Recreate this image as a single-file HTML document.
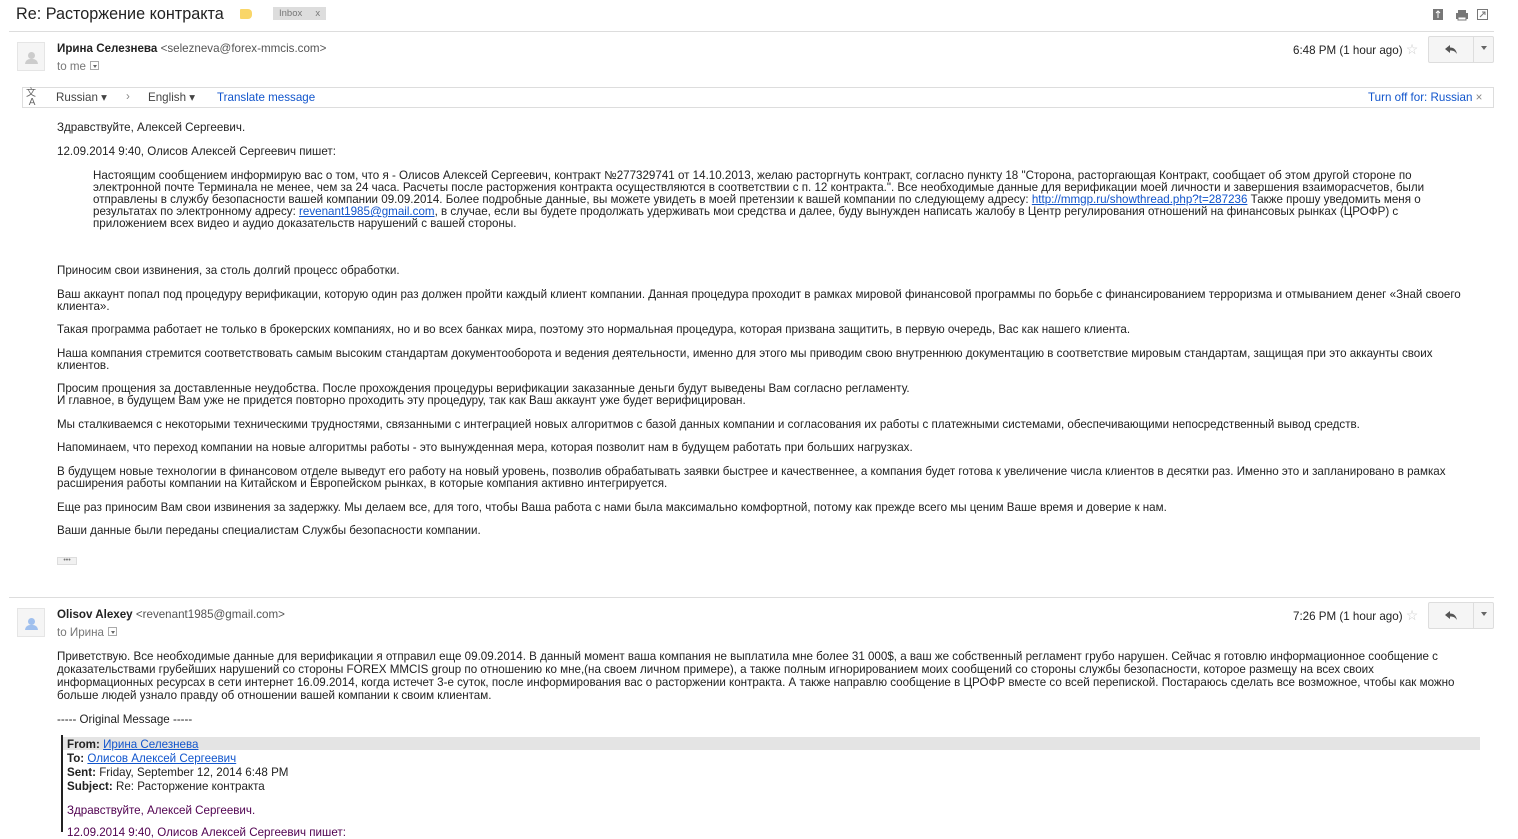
<!DOCTYPE html>
<html><head><meta charset="utf-8">
<style>
*{margin:0;padding:0;box-sizing:border-box}
body{width:1518px;height:832px;overflow:hidden;background:#fff;font-family:"Liberation Sans",Arial,sans-serif;color:#222;font-size:11.6px;position:relative}
.a{position:absolute;white-space:nowrap;line-height:12px;margin-top:1px}
.l13{line-height:13px}
a{color:#15c;text-decoration:underline}
.hr{position:absolute;left:9px;width:1485px;height:1px;background:#ddd}
.av{position:absolute;left:17px;width:28px;height:29px;background:#f5f5f5;border:1px solid #e5e5e5}
.btn{position:absolute;left:1428px;width:66px;height:27px;border:1px solid #ddd;background:#f5f5f5;border-radius:2px}
.btn:after{content:"";position:absolute;left:44px;top:0;width:1px;height:25px;background:#ddd}
.dd{display:inline-block;width:9px;height:9px;border:1px solid #aaa;vertical-align:middle;margin-left:4px;position:relative;top:-1px}
.dd:after{content:"";position:absolute;left:2px;top:3px;border:2px solid transparent;border-top:3px solid #666}
</style></head><body>
<div class="a" style="left:16px;top:4px;font-size:16.2px;line-height:18px;color:#222">Re: Расторжение контракта</div>
<div style="position:absolute;left:240px;top:9px;width:12px;height:10px;background:#f9d669;border-radius:1px 4px 4px 1px"></div>
<div class="a" style="left:273px;top:6px;width:53px;height:13px;background:#ddd;color:#777;font-size:9.5px;line-height:13px;padding-left:6px">Inbox&nbsp;&nbsp;&nbsp;&nbsp;&nbsp;x</div>
<svg style="position:absolute;left:1432px;top:8px" width="60" height="14">
<rect x="1" y="1" width="10" height="11" fill="#777"/><path d="M6 3v7M4 5l2-2 2 2" stroke="#fff" fill="none"/>
<rect x="24" y="5" width="12" height="6" fill="#777"/><rect x="26" y="2" width="8" height="3" fill="#777"/><rect x="26" y="9" width="8" height="3" fill="#fff" stroke="#777"/>
<rect x="45.5" y="1.5" width="10" height="10" fill="none" stroke="#777"/><path d="M48 9l5-5M50 4h3v3" stroke="#777" fill="none"/>
</svg>
<div class="hr" style="top:31px"></div>

<div class="av" style="top:42px"><div style="position:absolute;left:10px;top:9px;width:7px;height:7px;border-radius:50%;background:#ccc"></div><div style="position:absolute;left:7px;top:16px;width:13px;height:5px;border-radius:5px 5px 0 0;background:#ccc"></div></div>
<div class="a" style="left:57px;top:42px"><b>Ирина Селезнева</b> <span style="color:#555">&lt;selezneva@forex-mmcis.com&gt;</span></div>
<div class="a" style="left:57px;top:60px;color:#777">to me<span class="dd"></span></div>
<div class="a" style="left:1293px;top:42px;color:#222">6:48 PM (1 hour ago) <span style="color:#ccc;font-size:14px">☆</span></div>
<div class="btn" style="top:36px"><svg style="position:absolute;left:15px;top:7px" width="14" height="11"><path d="M1 5L6 1v2.5c4 0 6 2 7 6.5-2-3-4-3.5-7-3.5V9z" fill="#555"/></svg><span style="position:absolute;left:52px;top:9px;border:3px solid transparent;border-top:4px solid #666"></span></div>

<div style="position:absolute;left:22px;top:87px;width:1472px;height:21px;border:1px solid #ddd"></div>
<div class="a" style="left:26px;top:88px;font-size:10px;color:#666;line-height:9px">文<br>&nbsp;A</div>
<div class="a" style="left:56px;top:91px;color:#444">Russian ▾</div>
<div class="a" style="left:126px;top:90px;color:#888">›</div>
<div class="a" style="left:148px;top:91px;color:#444">English ▾</div>
<div class="a" style="left:217px;top:91px;color:#15c">Translate message</div>
<div class="a" style="left:1368px;top:91px;color:#15c">Turn off for: Russian <span style="color:#888">×</span></div>

<div class="a" style="left:57px;top:121px">Здравствуйте, Алексей Сергеевич.</div>
<div class="a" style="left:57px;top:145px">12.09.2014 9:40, Олисов Алексей Сергеевич пишет:</div>
<div class="a" style="left:93px;top:169px">Настоящим сообщением информирую вас о том, что я - Олисов Алексей Сергеевич, контракт №277329741 от 14.10.2013, желаю расторгнуть контракт, согласно пункту 18 "Сторона, расторгающая Контракт, сообщает об этом другой стороне по<br>электронной почте Терминала не менее, чем за 24 часа. Расчеты после расторжения контракта осуществляются в соответствии с п. 12 контракта.". Все необходимые данные для верификации моей личности и завершения взаиморасчетов, были<br>отправлены в службу безопасности вашей компании 09.09.2014. Более подробные данные, вы можете увидеть в моей претензии к вашей компании по следующему адресу: <a>http://mmgp.ru/showthread.php?t=287236</a> Также прошу уведомить меня о<br>результатах по электронному адресу: <a>revenant1985@gmail.com</a>, в случае, если вы будете продолжать удерживать мои средства и далее, буду вынужден написать жалобу в Центр регулирования отношений на финансовых рынках (ЦРОФР) с<br>приложением всех видео и аудио доказательств нарушений с вашей стороны.</div>

<div class="a" style="left:57px;top:264px">Приносим свои извинения, за столь долгий процесс обработки.</div>
<div class="a" style="left:57px;top:288px">Ваш аккаунт попал под процедуру верификации, которую один раз должен пройти каждый клиент компании. Данная процедура проходит в рамках мировой финансовой программы по борьбе с финансированием терроризма и отмыванием денег «Знай своего<br>клиента».</div>
<div class="a" style="left:57px;top:323px">Такая программа работает не только в брокерских компаниях, но и во всех банках мира, поэтому это нормальная процедура, которая призвана защитить, в первую очередь, Вас как нашего клиента.</div>
<div class="a" style="left:57px;top:347px">Наша компания стремится соответствовать самым высоким стандартам документооборота и ведения деятельности, именно для этого мы приводим свою внутреннюю документацию в соответствие мировым стандартам, защищая при это аккаунты своих<br>клиентов.</div>
<div class="a" style="left:57px;top:382px">Просим прощения за доставленные неудобства. После прохождения процедуры верификации заказанные деньги будут выведены Вам согласно регламенту.<br>И главное, в будущем Вам уже не придется повторно проходить эту процедуру, так как Ваш аккаунт уже будет верифицирован.</div>
<div class="a" style="left:57px;top:418px">Мы сталкиваемся с некоторыми техническими трудностями, связанными с интеграцией новых алгоритмов с базой данных компании и согласования их работы с платежными системами, обеспечивающими непосредственный вывод средств.</div>
<div class="a" style="left:57px;top:441px">Напоминаем, что переход компании на новые алгоритмы работы - это вынужденная мера, которая позволит нам в будущем работать при больших нагрузках.</div>
<div class="a" style="left:57px;top:465px">В будущем новые технологии в финансовом отделе выведут его работу на новый уровень, позволив обрабатывать заявки быстрее и качественнее, а компания будет готова к увеличение числа клиентов в десятки раз. Именно это и запланировано в рамках<br>расширения работы компании на Китайском и Европейском рынках, в которые компания активно интегрируется.</div>
<div class="a" style="left:57px;top:501px">Еще раз приносим Вам свои извинения за задержку. Мы делаем все, для того, чтобы Ваша работа с нами была максимально комфортной, потому как прежде всего мы ценим Ваше время и доверие к нам.</div>
<div class="a" style="left:57px;top:524px">Ваши данные были переданы специалистам Службы безопасности компании.</div>
<div style="position:absolute;left:57px;top:557px;width:20px;height:8px;background:#f1f1f1;border:1px solid #ddd;font-size:7px;line-height:5px;color:#777;text-align:center">•••</div>

<div class="hr" style="top:597px"></div>
<div class="av" style="top:608px"><div style="position:absolute;left:10px;top:9px;width:7px;height:7px;border-radius:50%;background:#a0c0ee"></div><div style="position:absolute;left:7px;top:16px;width:13px;height:5px;border-radius:5px 5px 0 0;background:#a0c0ee"></div></div>
<div class="a" style="left:57px;top:608px"><b>Olisov Alexey</b> <span style="color:#555">&lt;revenant1985@gmail.com&gt;</span></div>
<div class="a" style="left:57px;top:626px;color:#777">to Ирина<span class="dd"></span></div>
<div class="a" style="left:1293px;top:608px">7:26 PM (1 hour ago) <span style="color:#ccc;font-size:14px">☆</span></div>
<div class="btn" style="top:602px"><svg style="position:absolute;left:15px;top:7px" width="14" height="11"><path d="M1 5L6 1v2.5c4 0 6 2 7 6.5-2-3-4-3.5-7-3.5V9z" fill="#555"/></svg><span style="position:absolute;left:52px;top:9px;border:3px solid transparent;border-top:4px solid #666"></span></div>

<div class="a l13" style="left:57px;top:649px">Приветствую. Все необходимые данные для верификации я отправил еще 09.09.2014. В данный момент ваша компания не выплатила мне более 31 000$, а ваш же собственный регламент грубо нарушен. Сейчас я готовлю информационное сообщение с<br>доказательствами грубейших нарушений со стороны FOREX MMCIS group по отношению ко мне,(на своем личном примере), а также полным игнорированием моих сообщений со стороны службы безопасности, которое размещу на всех своих<br>информационных ресурсах в сети интернет 16.09.2014, когда истечет 3-е суток, после информирования вас о расторжении контракта. А также направлю сообщение в ЦРОФР вместе со всей перепиской. Постараюсь сделать все возможное, чтобы как можно<br>больше людей узнало правду об отношении вашей компании к своим клиентам.</div>
<div class="a" style="left:57px;top:713px">----- Original Message -----</div>
<div style="position:absolute;left:61px;top:735px;width:2px;height:97px;background:#222"></div>
<div style="position:absolute;left:63px;top:737px;width:1417px;height:13px;background:#e4e4e4"></div>
<div class="a" style="left:67px;top:737px;line-height:14px"><b>From:</b> <a>Ирина Селезнева</a><br><b>To:</b> <a>Олисов Алексей Сергеевич</a><br><b>Sent:</b> Friday, September 12, 2014 6:48 PM<br><b>Subject:</b> Re: Расторжение контракта</div>
<div class="a" style="left:67px;top:804px;color:#500050">Здравствуйте, Алексей Сергеевич.</div>
<div class="a" style="left:67px;top:826px;color:#500050">12.09.2014 9:40, Олисов Алексей Сергеевич пишет:</div>
</body></html>
